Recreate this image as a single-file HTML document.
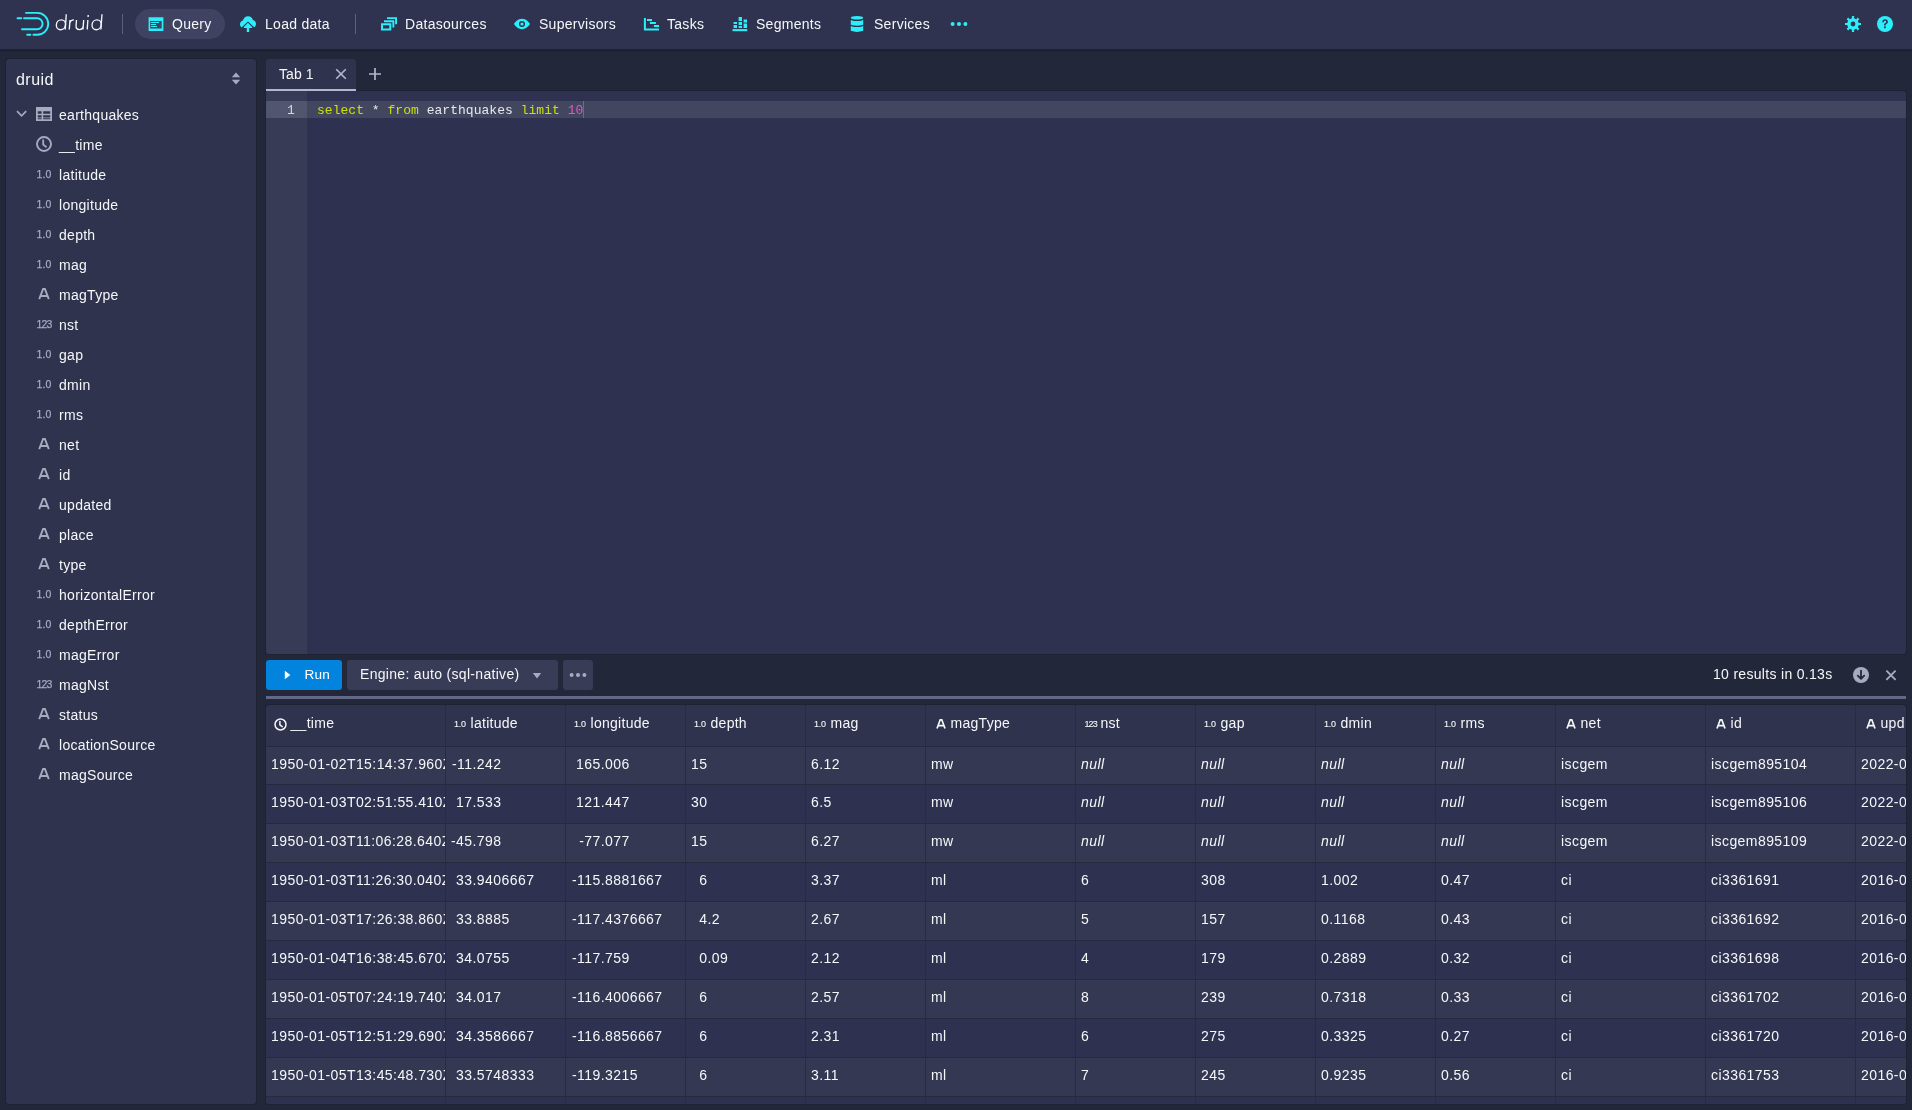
<!DOCTYPE html>
<html><head><meta charset="utf-8">
<style>
*{box-sizing:border-box;margin:0;padding:0}
html,body{width:1912px;height:1110px;overflow:hidden;background:#23273a;font-family:"Liberation Sans",sans-serif;font-size:14px;letter-spacing:0.28px;color:#f6f7f9}
.abs{position:absolute}
svg{position:absolute;display:block;overflow:visible}
.t{position:absolute;white-space:pre;line-height:16px}
#hdr{position:absolute;left:0;top:0;width:1912px;height:49px;background:#2f334f;box-shadow:0 1px 0 #1f2233,0 2px 1px rgba(20,22,35,0.4)}
.cy{fill:#2ceefb}
.nav{position:absolute;top:16px;line-height:16px;color:#f6f7f9}
.div{position:absolute;top:14px;width:1px;height:20px;background:#5b6080}
#side{position:absolute;left:6px;top:59px;width:250px;height:1045px;background:#2f334d;border-radius:3px;box-shadow:0 0 0 1px rgba(17,20,32,0.28)}
.ti{position:absolute;left:53px;line-height:16px;color:#f6f7f9;margin-top:0.5px}
.gi{fill:#a6abc0}
.ic10{position:absolute;font-size:10px;letter-spacing:0;color:#a6abc0;line-height:10px;-webkit-text-stroke:0.25px currentColor}
#tab{position:absolute;z-index:2;left:266px;top:59px;width:90px;height:32px;background:#2f334d;border-radius:3px 3px 0 0}
#ed{position:absolute;left:266px;top:91px;width:1640px;height:563px;background:#2e3250;border-radius:0 3px 3px 3px;overflow:hidden;box-shadow:0 0 0 1px rgba(17,20,32,0.28)}
.code{font-family:"Liberation Mono",monospace;font-size:13px;letter-spacing:0.03px;line-height:17px}
.btn{position:absolute;top:660px;height:30px;border-radius:3px}
#tbl{position:absolute;left:266px;top:705px;width:1640px;height:399px;background:#2f334e;border-radius:3px;overflow:hidden;box-shadow:0 0 0 1px rgba(17,20,32,0.28)}
.row{position:absolute;left:0;width:1640px;height:39px;border-bottom:1px solid #262a3e}
.odd{background:#343852}
.even{background:#2e3250}
.c{position:absolute;top:0;height:100%;border-right:1px solid #282c40;line-height:16px;padding-top:9px;padding-left:5px;white-space:pre;overflow:hidden;letter-spacing:0.43px}
.hc{position:absolute;top:0;height:41px;border-right:1px solid #282c40;white-space:pre;overflow:hidden}
.null{font-style:italic}
</style></head><body>
<div id="root" style="position:absolute;left:0;top:0;width:1912px;height:1110px;will-change:transform">

<!-- HEADER -->
<div id="hdr">
  <svg width="40" height="30" style="left:10px;top:8px" viewBox="10 8 40 30">
    <g fill="none" stroke="#2ceefb" stroke-width="1.9" stroke-linecap="round">
      <path d="M26 12.9 H37.3 A10.95 10.95 0 0 1 37.3 34.8 H33.4"/>
      <path d="M24 18.2 H37.1 A5.5 5.5 0 0 1 37.1 29.2 H22"/>
      <path d="M17.5 18.2 H21.2"/>
      <path d="M27.2 34.8 H30.4"/>
    </g>
  </svg>
  <svg width="50" height="22" style="left:54px;top:12px" viewBox="54 12 50 22">
    <g transform="translate(0,29.6) skewX(-4) translate(0,-29.6)"><g fill="none" stroke="#f4f6fa" stroke-width="1.35">
      <ellipse cx="60.6" cy="24.8" rx="4.6" ry="4.9"/>
      <path d="M65.2 14.2 V29.6"/>
      <path d="M69.3 19.9 V29.6 M69.3 23.5 Q69.8 20 73.2 19.9"/>
      <path d="M75.8 19.9 V25.6 Q75.8 29.6 79.4 29.6 Q83 29.6 83 25.6 V19.9 M83 22 V29.6"/>
      <path d="M87.2 19.9 V29.6"/>
      <ellipse cx="96.3" cy="24.8" rx="4.6" ry="4.9"/>
      <path d="M100.9 14.2 V29.6"/>
    </g>
    <circle cx="87.2" cy="16" r="0.95" fill="#f4f6fa"/></g>
  </svg>
  <div class="div" style="left:122px"></div>

  <div class="abs" style="left:135px;top:9px;width:90px;height:30px;border-radius:15px;background:#3f4361"></div>
  <svg width="16" height="16" style="left:148px;top:16px" viewBox="0 0 16 16">
    <path class="cy" fill-rule="evenodd" d="M0.6 1.2 H15.4 V15 H0.6 Z M2.2 5.1 V12.6 H13.7 V5.1 Z"/>
    <path class="cy" d="M3 6.1 H11 V7 H3 Z M3 8.1 H8.1 V9 H3 Z M3 10.1 H9 V11 H3 Z"/>
  </svg>
  <div class="nav" style="left:172px">Query</div>

  <svg width="16" height="16" style="left:240px;top:16px" viewBox="0 0 16 16">
    <path class="cy" d="M8 0.2 C10.6 0.2 12.4 1.9 12.9 4.1 C14.8 4.5 16 6.1 16 8.1 C16 9.6 15.2 10.8 14.1 11.3 L8.6 6 C8.2 5.6 7.7 5.6 7.3 6 L1.6 11.5 C0.6 10.8 0 9.6 0 8.3 C0 6.6 1.1 5.1 2.9 4.6 C3.4 2.1 5.4 0.2 8 0.2 Z"/>
    <path class="cy" d="M7.9 6.8 L12.1 11 C12.4 11.4 12.3 11.9 11.8 12 L9.2 12 V16 H6.8 V12 L4.2 12 C3.7 11.9 3.6 11.4 3.9 11 Z"/>
  </svg>
  <div class="nav" style="left:265px">Load data</div>
  <div class="div" style="left:355px"></div>

  <svg width="16" height="16" style="left:381px;top:16px" viewBox="0 0 16 16">
    <path class="cy" fill-rule="evenodd" d="M0 7.3 H10.3 V14.4 H0 Z M2 9.3 V12.4 H8.3 V9.3 Z"/>
    <path class="cy" d="M3 4.3 H13.3 V11.4 H11.4 V6.2 H3 Z"/>
    <path class="cy" d="M6 1.2 H16 V8.3 H14.1 V3.1 H6 Z"/>
  </svg>
  <div class="nav" style="left:405px">Datasources</div>

  <svg width="16" height="16" style="left:514px;top:16px" viewBox="0 0 16 16">
    <path class="cy" fill-rule="evenodd" d="M8 2.8 C12.2 2.8 15.2 6.6 16 8 C15.2 9.4 12.2 13.2 8 13.2 C3.8 13.2 0.8 9.4 0 8 C0.8 6.6 3.8 2.8 8 2.8 Z M8 5 A3 3 0 1 0 8 11 A3 3 0 1 0 8 5 Z"/>
    <circle class="cy" cx="8" cy="8" r="1.6"/>
  </svg>
  <div class="nav" style="left:539px">Supervisors</div>

  <svg width="16" height="16" style="left:643px;top:16px" viewBox="0 0 16 16">
    <path class="cy" d="M0.9 2 H2.9 V12.6 H16 V14.6 H0.9 Z"/>
    <path class="cy" d="M4 3 H9 V5 H4 Z M6.9 6 H12.9 V8 H6.9 Z M10.9 9 H16 V11 H10.9 Z"/>
  </svg>
  <div class="nav" style="left:667px">Tasks</div>

  <svg width="16" height="16" style="left:732px;top:16px" viewBox="0 0 16 16">
    <path class="cy" d="M0.5 13.1 H15.3 V15.2 H0.5 Z"/>
    <path class="cy" d="M1.6 6 H5 V8 H1.6 Z M1.6 9 H5 V12 H1.6 Z M6.6 1 H10 V5 H6.6 Z M6.6 6 H10 V9 H6.6 Z M6.6 10 H10 V12 H6.6 Z M11.6 3.5 H15 V6.5 H11.6 Z M11.6 7.5 H15 V12 H11.6 Z"/>
  </svg>
  <div class="nav" style="left:756px">Segments</div>

  <svg width="16" height="16" style="left:849px;top:16px" viewBox="0 0 16 16">
    <ellipse class="cy" cx="8" cy="1.8" rx="6.2" ry="1.8"/>
    <path class="cy" d="M1.8 3.9 Q8 6.3 14.2 3.9 V8.8 Q8 10.8 1.8 8.8 Z"/>
    <path class="cy" d="M1.8 9.9 Q8 12.3 14.2 9.9 V14.8 Q8 17 1.8 14.8 Z"/>
  </svg>
  <div class="nav" style="left:874px">Services</div>

  <svg width="18" height="6" style="left:950px;top:21px" viewBox="0 0 18 6">
    <circle class="cy" cx="2.6" cy="3" r="2"/><circle class="cy" cx="9" cy="3" r="2"/><circle class="cy" cx="15.4" cy="3" r="2"/>
  </svg>

  <svg width="16" height="16" style="left:1845px;top:16px" viewBox="0 0 16 16">
    <path class="cy" fill-rule="evenodd" d="M6.9 0 H9.1 V2.3 C9.9 2.5 10.6 2.8 11.2 3.2 L12.8 1.6 L14.4 3.2 L12.8 4.8 C13.2 5.4 13.5 6.1 13.7 6.9 H16 V9.1 H13.7 C13.5 9.9 13.2 10.6 12.8 11.2 L14.4 12.8 L12.8 14.4 L11.2 12.8 C10.6 13.2 9.9 13.5 9.1 13.7 V16 H6.9 V13.7 C6.1 13.5 5.4 13.2 4.8 12.8 L3.2 14.4 L1.6 12.8 L3.2 11.2 C2.8 10.6 2.5 9.9 2.3 9.1 H0 V6.9 H2.3 C2.5 6.1 2.8 5.4 3.2 4.8 L1.6 3.2 L3.2 1.6 L4.8 3.2 C5.4 2.8 6.1 2.5 6.9 2.3 Z M8 5.6 A2.4 2.4 0 1 0 8 10.4 A2.4 2.4 0 1 0 8 5.6 Z"/>
  </svg>
  <svg width="16" height="16" style="left:1877px;top:16px" viewBox="0 0 16 16">
    <circle class="cy" cx="8" cy="8" r="8"/>
    <path fill="#2f334f" d="M5.2 6.2 C5.2 4.4 6.4 3.3 8.1 3.3 C9.8 3.3 10.9 4.3 10.9 5.8 C10.9 7 10.1 7.6 9.3 8.1 C8.8 8.4 8.7 8.7 8.7 9.4 H7.1 C7.1 8.3 7.3 7.7 8.2 7.1 C8.9 6.6 9.2 6.4 9.2 5.8 C9.2 5.2 8.8 4.8 8.1 4.8 C7.3 4.8 6.9 5.3 6.9 6.2 Z"/>
    <rect x="7" y="10.4" width="1.8" height="1.8" fill="#2f334f"/>
  </svg>
</div>

<!-- SIDEBAR -->
<div id="side">
<div class="t" style="left:10px;top:12px;font-size:16px;line-height:18px;letter-spacing:0.45px">druid</div>
<svg width="10" height="14" style="left:225px;top:13px" viewBox="0 0 10 14"><path class="gi" d="M5 0.4 L9.2 5.2 H0.8 Z M0.8 7.8 H9.2 L5 12.6 Z"/></svg>
<svg width="12" height="8" style="left:10px;top:51px" viewBox="0 0 12 8"><path fill="none" stroke="#a6abc0" stroke-width="1.7" d="M1 1.2 L5.6 5.8 L10.2 1.2"/></svg>
<svg width="16" height="16" style="left:30px;top:47px" viewBox="0 0 16 16"><path class="gi" fill-rule="evenodd" d="M0 1 H16 V15 H0 Z M1.8 5.2 V7.7 H5.6 V5.2 Z M7.2 5.2 V7.7 H14.2 V5.2 Z M1.8 9.3 V11.4 H5.6 V9.3 Z M7.2 9.3 V11.4 H14.2 V9.3 Z M1.8 12.2 V13.2 H5.6 V12.2 Z M7.2 12.2 V13.2 H14.2 V12.2 Z"/></svg>
<div class="ti" style="top:47px">earthquakes</div>
<svg width="16" height="16" style="left:30px;top:77px" viewBox="0 0 16 16"><circle cx="8" cy="8" r="7" fill="none" stroke="#a6abc0" stroke-width="1.9"/><path fill="none" stroke="#a6abc0" stroke-width="1.8" stroke-linecap="round" d="M7.2 4.2 V8.6 L10 10.8"/></svg>
<div class="ti" style="top:77px">__time</div>
<div class="ic10" style="left:30.5px;top:110px;letter-spacing:0.15px;font-size:10.5px">1.0</div>
<div class="ti" style="top:107px">latitude</div>
<div class="ic10" style="left:30.5px;top:140px;letter-spacing:0.15px;font-size:10.5px">1.0</div>
<div class="ti" style="top:137px">longitude</div>
<div class="ic10" style="left:30.5px;top:170px;letter-spacing:0.15px;font-size:10.5px">1.0</div>
<div class="ti" style="top:167px">depth</div>
<div class="ic10" style="left:30.5px;top:200px;letter-spacing:0.15px;font-size:10.5px">1.0</div>
<div class="ti" style="top:197px">mag</div>
<svg width="12" height="12" style="left:32px;top:229px" viewBox="0 0 12 12"><path fill="none" stroke="#a6abc0" stroke-width="1.9" d="M1.2 11.2 L5.1 1 H6.9 L10.8 11.2 M3 8 H9"/></svg>
<div class="ti" style="top:227px">magType</div>
<div class="ic10" style="left:30.5px;top:260px;letter-spacing:-0.9px;font-size:10.5px">123</div>
<div class="ti" style="top:257px">nst</div>
<div class="ic10" style="left:30.5px;top:290px;letter-spacing:0.15px;font-size:10.5px">1.0</div>
<div class="ti" style="top:287px">gap</div>
<div class="ic10" style="left:30.5px;top:320px;letter-spacing:0.15px;font-size:10.5px">1.0</div>
<div class="ti" style="top:317px">dmin</div>
<div class="ic10" style="left:30.5px;top:350px;letter-spacing:0.15px;font-size:10.5px">1.0</div>
<div class="ti" style="top:347px">rms</div>
<svg width="12" height="12" style="left:32px;top:379px" viewBox="0 0 12 12"><path fill="none" stroke="#a6abc0" stroke-width="1.9" d="M1.2 11.2 L5.1 1 H6.9 L10.8 11.2 M3 8 H9"/></svg>
<div class="ti" style="top:377px">net</div>
<svg width="12" height="12" style="left:32px;top:409px" viewBox="0 0 12 12"><path fill="none" stroke="#a6abc0" stroke-width="1.9" d="M1.2 11.2 L5.1 1 H6.9 L10.8 11.2 M3 8 H9"/></svg>
<div class="ti" style="top:407px">id</div>
<svg width="12" height="12" style="left:32px;top:439px" viewBox="0 0 12 12"><path fill="none" stroke="#a6abc0" stroke-width="1.9" d="M1.2 11.2 L5.1 1 H6.9 L10.8 11.2 M3 8 H9"/></svg>
<div class="ti" style="top:437px">updated</div>
<svg width="12" height="12" style="left:32px;top:469px" viewBox="0 0 12 12"><path fill="none" stroke="#a6abc0" stroke-width="1.9" d="M1.2 11.2 L5.1 1 H6.9 L10.8 11.2 M3 8 H9"/></svg>
<div class="ti" style="top:467px">place</div>
<svg width="12" height="12" style="left:32px;top:499px" viewBox="0 0 12 12"><path fill="none" stroke="#a6abc0" stroke-width="1.9" d="M1.2 11.2 L5.1 1 H6.9 L10.8 11.2 M3 8 H9"/></svg>
<div class="ti" style="top:497px">type</div>
<div class="ic10" style="left:30.5px;top:530px;letter-spacing:0.15px;font-size:10.5px">1.0</div>
<div class="ti" style="top:527px">horizontalError</div>
<div class="ic10" style="left:30.5px;top:560px;letter-spacing:0.15px;font-size:10.5px">1.0</div>
<div class="ti" style="top:557px">depthError</div>
<div class="ic10" style="left:30.5px;top:590px;letter-spacing:0.15px;font-size:10.5px">1.0</div>
<div class="ti" style="top:587px">magError</div>
<div class="ic10" style="left:30.5px;top:620px;letter-spacing:-0.9px;font-size:10.5px">123</div>
<div class="ti" style="top:617px">magNst</div>
<svg width="12" height="12" style="left:32px;top:649px" viewBox="0 0 12 12"><path fill="none" stroke="#a6abc0" stroke-width="1.9" d="M1.2 11.2 L5.1 1 H6.9 L10.8 11.2 M3 8 H9"/></svg>
<div class="ti" style="top:647px">status</div>
<svg width="12" height="12" style="left:32px;top:679px" viewBox="0 0 12 12"><path fill="none" stroke="#a6abc0" stroke-width="1.9" d="M1.2 11.2 L5.1 1 H6.9 L10.8 11.2 M3 8 H9"/></svg>
<div class="ti" style="top:677px">locationSource</div>
<svg width="12" height="12" style="left:32px;top:709px" viewBox="0 0 12 12"><path fill="none" stroke="#a6abc0" stroke-width="1.9" d="M1.2 11.2 L5.1 1 H6.9 L10.8 11.2 M3 8 H9"/></svg>
<div class="ti" style="top:707px">magSource</div>
</div>

<!-- MAIN -->
<div id="tab">
<div class="t" style="left:13px;top:7px;letter-spacing:0.1px">Tab 1</div>
<svg width="12" height="12" style="left:69px;top:9px" viewBox="0 0 12 12"><path fill="none" stroke="#b3b8cc" stroke-width="1.6" d="M1.2 1.2 L10.8 10.8 M10.8 1.2 L1.2 10.8"/></svg>
<div class="abs" style="left:0;top:30px;width:90px;height:2px;background:#b2b7cb"></div>
</div>
<svg width="14" height="14" style="left:368px;top:67px" viewBox="0 0 14 14"><path fill="none" stroke="#b3b8cc" stroke-width="1.7" d="M7 1 V13 M1 7 H13"/></svg>
<div id="ed">
<div class="abs" style="left:0;top:0;width:41px;height:563px;background:#373b55"></div>
<div class="abs" style="left:0;top:10px;width:41px;height:17px;background:#51566f"></div>
<div class="abs" style="left:41px;top:10px;width:1599px;height:17px;background:#42465e"></div>
<div class="t code" style="left:21px;top:11px;color:#d4d6e0">1</div>
<div class="t code" style="left:51px;top:11px"><span style="color:#cbe00c">select</span><span style="color:#e8e9ee"> * </span><span style="color:#cbe00c">from</span><span style="color:#e8e9ee"> earthquakes </span><span style="color:#cbe00c">limit</span> <span style="color:#e256c4">10</span></div>
<div class="abs" style="left:317px;top:10px;width:1px;height:17px;background:#b84a6a"></div>
</div>
<div class="btn" style="left:266px;width:76px;background:#0283de"></div>
<svg width="8" height="10" style="left:284px;top:670px" viewBox="0 0 8 10"><path fill="#fff" d="M0.8 0.8 L6.4 5 L0.8 9.2 Z"/></svg>
<div class="t" style="left:304.5px;top:666.5px;color:#fff;font-size:13.6px;letter-spacing:0.2px">Run</div>
<div class="btn" style="left:347px;width:211px;background:#383c56"></div>
<div class="t" style="left:360px;top:666px;letter-spacing:0.31px">Engine: auto (sql-native)</div>
<svg width="10" height="7" style="left:532px;top:672px" viewBox="0 0 10 7"><path class="gi" d="M0.8 1 H9.2 L5 6.6 Z"/></svg>
<div class="btn" style="left:563px;width:30px;background:#383c56"></div>
<svg width="18" height="6" style="left:569px;top:672px" viewBox="0 0 18 6"><circle class="gi" cx="2.6" cy="3" r="2"/><circle class="gi" cx="9" cy="3" r="2"/><circle class="gi" cx="15.4" cy="3" r="2"/></svg>
<div class="t" style="left:1713px;top:666px;letter-spacing:0.31px">10 results in 0.13s</div>
<svg width="16" height="16" style="left:1853px;top:667px" viewBox="0 0 16 16"><circle class="gi" cx="8" cy="8" r="8"/><path fill="none" stroke="#23273a" stroke-width="1.8" stroke-linecap="round" stroke-linejoin="round" d="M8 3.6 V11.6 M4.8 8.6 L8 11.8 L11.2 8.6"/></svg>
<svg width="12" height="12" style="left:1885px;top:669px" viewBox="0 0 12 12"><path fill="none" stroke="#a6abc0" stroke-width="1.9" d="M1.4 1.6 L10.6 10.8 M10.6 1.6 L1.4 10.8"/></svg>
<div class="abs" style="left:266px;top:696px;width:1640px;height:3px;background:#626886"></div>
<div id="tbl">
<div class="hc" style="left:0px;width:180px">
<svg width="13" height="13" style="left:7.5px;top:12.5px" viewBox="0 0 13 13"><circle cx="6.5" cy="6.5" r="5.5" fill="none" stroke="#f6f7f9" stroke-width="1.5"/><path fill="none" stroke="#f6f7f9" stroke-width="1.5" stroke-linecap="round" d="M5.9 3.4 V6.9 L8.2 8.6"/></svg>
<div class="t" style="left:24.5px;top:10.3px">__time</div></div>
<div class="hc" style="left:180px;width:120px">
<div class="ic10" style="left:8px;top:13.8px;color:#f6f7f9;font-size:9px;letter-spacing:-0.2px;-webkit-text-stroke:0.1px #f6f7f9">1.0</div>
<div class="t" style="left:24.5px;top:10.3px">latitude</div></div>
<div class="hc" style="left:300px;width:120px">
<div class="ic10" style="left:8px;top:13.8px;color:#f6f7f9;font-size:9px;letter-spacing:-0.2px;-webkit-text-stroke:0.1px #f6f7f9">1.0</div>
<div class="t" style="left:24.5px;top:10.3px">longitude</div></div>
<div class="hc" style="left:420px;width:120px">
<div class="ic10" style="left:8px;top:13.8px;color:#f6f7f9;font-size:9px;letter-spacing:-0.2px;-webkit-text-stroke:0.1px #f6f7f9">1.0</div>
<div class="t" style="left:24.5px;top:10.3px">depth</div></div>
<div class="hc" style="left:540px;width:120px">
<div class="ic10" style="left:8px;top:13.8px;color:#f6f7f9;font-size:9px;letter-spacing:-0.2px;-webkit-text-stroke:0.1px #f6f7f9">1.0</div>
<div class="t" style="left:24.5px;top:10.3px">mag</div></div>
<div class="hc" style="left:660px;width:150px">
<svg width="10" height="10" style="left:9.5px;top:14.2px" viewBox="0 0 10 10"><path fill="none" stroke="#f6f7f9" stroke-width="1.7" stroke-linejoin="miter" d="M1 9.5 L4.2 0.8 H5.8 L9 9.5 M2.6 6.6 H7.4"/></svg>
<div class="t" style="left:24.5px;top:10.3px">magType</div></div>
<div class="hc" style="left:810px;width:120px">
<div class="ic10" style="left:8.5px;top:13.8px;color:#f6f7f9;font-size:9px;letter-spacing:-0.9px;-webkit-text-stroke:0.1px #f6f7f9">123</div>
<div class="t" style="left:24.5px;top:10.3px">nst</div></div>
<div class="hc" style="left:930px;width:120px">
<div class="ic10" style="left:8px;top:13.8px;color:#f6f7f9;font-size:9px;letter-spacing:-0.2px;-webkit-text-stroke:0.1px #f6f7f9">1.0</div>
<div class="t" style="left:24.5px;top:10.3px">gap</div></div>
<div class="hc" style="left:1050px;width:120px">
<div class="ic10" style="left:8px;top:13.8px;color:#f6f7f9;font-size:9px;letter-spacing:-0.2px;-webkit-text-stroke:0.1px #f6f7f9">1.0</div>
<div class="t" style="left:24.5px;top:10.3px">dmin</div></div>
<div class="hc" style="left:1170px;width:120px">
<div class="ic10" style="left:8px;top:13.8px;color:#f6f7f9;font-size:9px;letter-spacing:-0.2px;-webkit-text-stroke:0.1px #f6f7f9">1.0</div>
<div class="t" style="left:24.5px;top:10.3px">rms</div></div>
<div class="hc" style="left:1290px;width:150px">
<svg width="10" height="10" style="left:9.5px;top:14.2px" viewBox="0 0 10 10"><path fill="none" stroke="#f6f7f9" stroke-width="1.7" stroke-linejoin="miter" d="M1 9.5 L4.2 0.8 H5.8 L9 9.5 M2.6 6.6 H7.4"/></svg>
<div class="t" style="left:24.5px;top:10.3px">net</div></div>
<div class="hc" style="left:1440px;width:150px">
<svg width="10" height="10" style="left:9.5px;top:14.2px" viewBox="0 0 10 10"><path fill="none" stroke="#f6f7f9" stroke-width="1.7" stroke-linejoin="miter" d="M1 9.5 L4.2 0.8 H5.8 L9 9.5 M2.6 6.6 H7.4"/></svg>
<div class="t" style="left:24.5px;top:10.3px">id</div></div>
<div class="hc" style="left:1590px;width:150px">
<svg width="10" height="10" style="left:9.5px;top:14.2px" viewBox="0 0 10 10"><path fill="none" stroke="#f6f7f9" stroke-width="1.7" stroke-linejoin="miter" d="M1 9.5 L4.2 0.8 H5.8 L9 9.5 M2.6 6.6 H7.4"/></svg>
<div class="t" style="left:24.5px;top:10.3px">upd</div></div>
<div class="abs" style="left:0;top:41px;width:1640px;height:1px;background:#262a3e"></div>
<div class="row odd" style="top:42px;height:38px">
<div class="c" style="left:0px;width:180px">1950-01-02T15:14:37.960Z</div>
<div class="c" style="left:180px;width:120px"><span style="display:inline-block;text-align:right;width:21.52px">-11</span>.242</div>
<div class="c" style="left:300px;width:120px"><span style="display:inline-block;text-align:right;width:29.73px">165</span>.006</div>
<div class="c" style="left:420px;width:120px"><span style="display:inline-block;text-align:right;width:16.43px">15</span></div>
<div class="c" style="left:540px;width:120px">6.12</div>
<div class="c" style="left:660px;width:150px">mw</div>
<div class="c null" style="left:810px;width:120px">null</div>
<div class="c null" style="left:930px;width:120px">null</div>
<div class="c null" style="left:1050px;width:120px">null</div>
<div class="c null" style="left:1170px;width:120px">null</div>
<div class="c" style="left:1290px;width:150px">iscgem</div>
<div class="c" style="left:1440px;width:150px">iscgem895104</div>
<div class="c" style="left:1590px;width:150px">2022-04-26</div>
</div>
<div class="row even" style="top:80px;height:39px">
<div class="c" style="left:0px;width:180px">1950-01-03T02:51:55.410Z</div>
<div class="c" style="left:180px;width:120px"><span style="display:inline-block;text-align:right;width:21.52px">17</span>.533</div>
<div class="c" style="left:300px;width:120px"><span style="display:inline-block;text-align:right;width:29.73px">121</span>.447</div>
<div class="c" style="left:420px;width:120px"><span style="display:inline-block;text-align:right;width:16.43px">30</span></div>
<div class="c" style="left:540px;width:120px">6.5</div>
<div class="c" style="left:660px;width:150px">mw</div>
<div class="c null" style="left:810px;width:120px">null</div>
<div class="c null" style="left:930px;width:120px">null</div>
<div class="c null" style="left:1050px;width:120px">null</div>
<div class="c null" style="left:1170px;width:120px">null</div>
<div class="c" style="left:1290px;width:150px">iscgem</div>
<div class="c" style="left:1440px;width:150px">iscgem895106</div>
<div class="c" style="left:1590px;width:150px">2022-04-26</div>
</div>
<div class="row odd" style="top:119px;height:39px">
<div class="c" style="left:0px;width:180px">1950-01-03T11:06:28.640Z</div>
<div class="c" style="left:180px;width:120px"><span style="display:inline-block;text-align:right;width:21.52px">-45</span>.798</div>
<div class="c" style="left:300px;width:120px"><span style="display:inline-block;text-align:right;width:29.73px">-77</span>.077</div>
<div class="c" style="left:420px;width:120px"><span style="display:inline-block;text-align:right;width:16.43px">15</span></div>
<div class="c" style="left:540px;width:120px">6.27</div>
<div class="c" style="left:660px;width:150px">mw</div>
<div class="c null" style="left:810px;width:120px">null</div>
<div class="c null" style="left:930px;width:120px">null</div>
<div class="c null" style="left:1050px;width:120px">null</div>
<div class="c null" style="left:1170px;width:120px">null</div>
<div class="c" style="left:1290px;width:150px">iscgem</div>
<div class="c" style="left:1440px;width:150px">iscgem895109</div>
<div class="c" style="left:1590px;width:150px">2022-04-26</div>
</div>
<div class="row even" style="top:158px;height:39px">
<div class="c" style="left:0px;width:180px">1950-01-03T11:26:30.040Z</div>
<div class="c" style="left:180px;width:120px"><span style="display:inline-block;text-align:right;width:21.52px">33</span>.9406667</div>
<div class="c" style="left:300px;width:120px"><span style="display:inline-block;text-align:right;width:29.73px">-115</span>.8881667</div>
<div class="c" style="left:420px;width:120px"><span style="display:inline-block;text-align:right;width:16.43px">6</span></div>
<div class="c" style="left:540px;width:120px">3.37</div>
<div class="c" style="left:660px;width:150px">ml</div>
<div class="c" style="left:810px;width:120px">6</div>
<div class="c" style="left:930px;width:120px">308</div>
<div class="c" style="left:1050px;width:120px">1.002</div>
<div class="c" style="left:1170px;width:120px">0.47</div>
<div class="c" style="left:1290px;width:150px">ci</div>
<div class="c" style="left:1440px;width:150px">ci3361691</div>
<div class="c" style="left:1590px;width:150px">2016-01-28</div>
</div>
<div class="row odd" style="top:197px;height:39px">
<div class="c" style="left:0px;width:180px">1950-01-03T17:26:38.860Z</div>
<div class="c" style="left:180px;width:120px"><span style="display:inline-block;text-align:right;width:21.52px">33</span>.8885</div>
<div class="c" style="left:300px;width:120px"><span style="display:inline-block;text-align:right;width:29.73px">-117</span>.4376667</div>
<div class="c" style="left:420px;width:120px"><span style="display:inline-block;text-align:right;width:16.43px">4</span>.2</div>
<div class="c" style="left:540px;width:120px">2.67</div>
<div class="c" style="left:660px;width:150px">ml</div>
<div class="c" style="left:810px;width:120px">5</div>
<div class="c" style="left:930px;width:120px">157</div>
<div class="c" style="left:1050px;width:120px">0.1168</div>
<div class="c" style="left:1170px;width:120px">0.43</div>
<div class="c" style="left:1290px;width:150px">ci</div>
<div class="c" style="left:1440px;width:150px">ci3361692</div>
<div class="c" style="left:1590px;width:150px">2016-01-28</div>
</div>
<div class="row even" style="top:236px;height:39px">
<div class="c" style="left:0px;width:180px">1950-01-04T16:38:45.670Z</div>
<div class="c" style="left:180px;width:120px"><span style="display:inline-block;text-align:right;width:21.52px">34</span>.0755</div>
<div class="c" style="left:300px;width:120px"><span style="display:inline-block;text-align:right;width:29.73px">-117</span>.759</div>
<div class="c" style="left:420px;width:120px"><span style="display:inline-block;text-align:right;width:16.43px">0</span>.09</div>
<div class="c" style="left:540px;width:120px">2.12</div>
<div class="c" style="left:660px;width:150px">ml</div>
<div class="c" style="left:810px;width:120px">4</div>
<div class="c" style="left:930px;width:120px">179</div>
<div class="c" style="left:1050px;width:120px">0.2889</div>
<div class="c" style="left:1170px;width:120px">0.32</div>
<div class="c" style="left:1290px;width:150px">ci</div>
<div class="c" style="left:1440px;width:150px">ci3361698</div>
<div class="c" style="left:1590px;width:150px">2016-01-28</div>
</div>
<div class="row odd" style="top:275px;height:39px">
<div class="c" style="left:0px;width:180px">1950-01-05T07:24:19.740Z</div>
<div class="c" style="left:180px;width:120px"><span style="display:inline-block;text-align:right;width:21.52px">34</span>.017</div>
<div class="c" style="left:300px;width:120px"><span style="display:inline-block;text-align:right;width:29.73px">-116</span>.4006667</div>
<div class="c" style="left:420px;width:120px"><span style="display:inline-block;text-align:right;width:16.43px">6</span></div>
<div class="c" style="left:540px;width:120px">2.57</div>
<div class="c" style="left:660px;width:150px">ml</div>
<div class="c" style="left:810px;width:120px">8</div>
<div class="c" style="left:930px;width:120px">239</div>
<div class="c" style="left:1050px;width:120px">0.7318</div>
<div class="c" style="left:1170px;width:120px">0.33</div>
<div class="c" style="left:1290px;width:150px">ci</div>
<div class="c" style="left:1440px;width:150px">ci3361702</div>
<div class="c" style="left:1590px;width:150px">2016-01-28</div>
</div>
<div class="row even" style="top:314px;height:39px">
<div class="c" style="left:0px;width:180px">1950-01-05T12:51:29.690Z</div>
<div class="c" style="left:180px;width:120px"><span style="display:inline-block;text-align:right;width:21.52px">34</span>.3586667</div>
<div class="c" style="left:300px;width:120px"><span style="display:inline-block;text-align:right;width:29.73px">-116</span>.8856667</div>
<div class="c" style="left:420px;width:120px"><span style="display:inline-block;text-align:right;width:16.43px">6</span></div>
<div class="c" style="left:540px;width:120px">2.31</div>
<div class="c" style="left:660px;width:150px">ml</div>
<div class="c" style="left:810px;width:120px">6</div>
<div class="c" style="left:930px;width:120px">275</div>
<div class="c" style="left:1050px;width:120px">0.3325</div>
<div class="c" style="left:1170px;width:120px">0.27</div>
<div class="c" style="left:1290px;width:150px">ci</div>
<div class="c" style="left:1440px;width:150px">ci3361720</div>
<div class="c" style="left:1590px;width:150px">2016-01-28</div>
</div>
<div class="row odd" style="top:353px;height:39px">
<div class="c" style="left:0px;width:180px">1950-01-05T13:45:48.730Z</div>
<div class="c" style="left:180px;width:120px"><span style="display:inline-block;text-align:right;width:21.52px">33</span>.5748333</div>
<div class="c" style="left:300px;width:120px"><span style="display:inline-block;text-align:right;width:29.73px">-119</span>.3215</div>
<div class="c" style="left:420px;width:120px"><span style="display:inline-block;text-align:right;width:16.43px">6</span></div>
<div class="c" style="left:540px;width:120px">3.11</div>
<div class="c" style="left:660px;width:150px">ml</div>
<div class="c" style="left:810px;width:120px">7</div>
<div class="c" style="left:930px;width:120px">245</div>
<div class="c" style="left:1050px;width:120px">0.9235</div>
<div class="c" style="left:1170px;width:120px">0.56</div>
<div class="c" style="left:1290px;width:150px">ci</div>
<div class="c" style="left:1440px;width:150px">ci3361753</div>
<div class="c" style="left:1590px;width:150px">2016-01-28</div>
</div>
<div class="row even" style="top:392px;height:39px">
<div class="c" style="left:0px;width:180px">1950-01-05T14:12:33.120Z</div>
<div class="c" style="left:180px;width:120px"><span style="display:inline-block;text-align:right;width:21.52px">33</span>.1</div>
<div class="c" style="left:300px;width:120px"><span style="display:inline-block;text-align:right;width:29.73px">-116</span>.1</div>
<div class="c" style="left:420px;width:120px"><span style="display:inline-block;text-align:right;width:16.43px">6</span></div>
<div class="c" style="left:540px;width:120px">2.5</div>
<div class="c" style="left:660px;width:150px">ml</div>
<div class="c" style="left:810px;width:120px">5</div>
<div class="c" style="left:930px;width:120px">200</div>
<div class="c" style="left:1050px;width:120px">0.5</div>
<div class="c" style="left:1170px;width:120px">0.3</div>
<div class="c" style="left:1290px;width:150px">ci</div>
<div class="c" style="left:1440px;width:150px">ci3361760</div>
<div class="c" style="left:1590px;width:150px">2016-01-28</div>
</div>
</div>
</div>
</body></html>
